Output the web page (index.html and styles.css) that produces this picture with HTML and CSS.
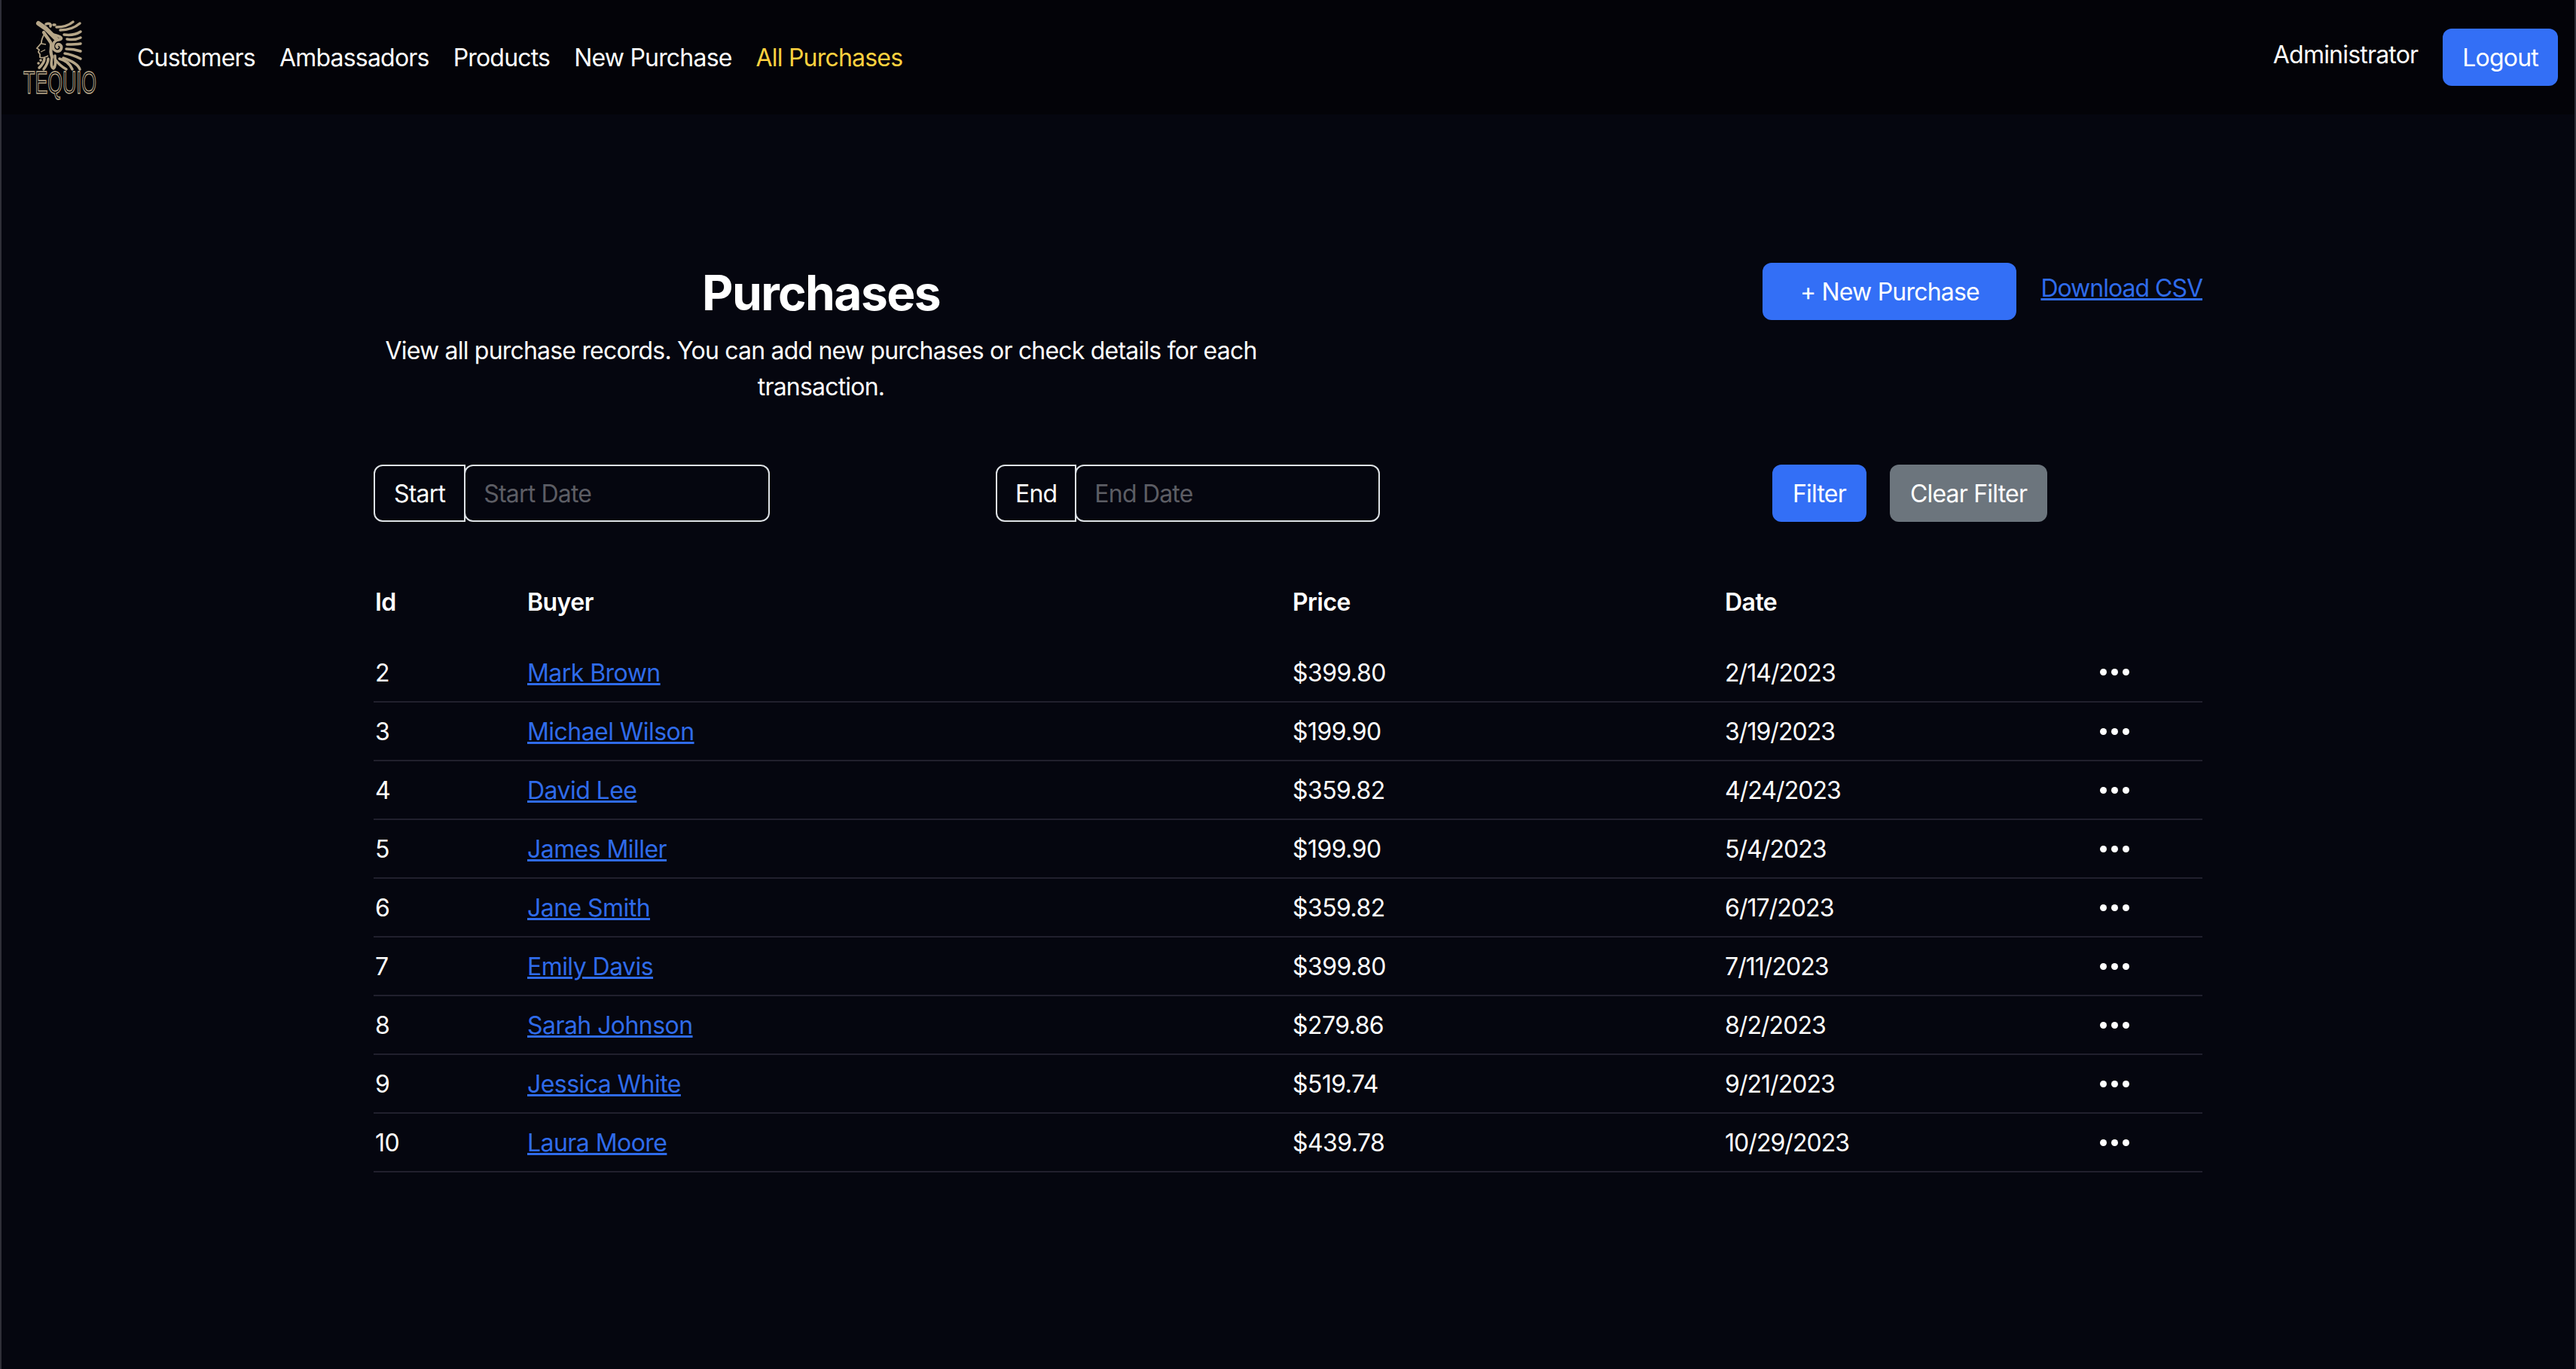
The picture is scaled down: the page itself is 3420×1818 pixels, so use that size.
FILE: index.html
```html
<!DOCTYPE html>
<html lang="en">
<head>
<meta charset="utf-8">
<title>Purchases</title>
<link rel="stylesheet" href="styles.css">
</head>
<body>
<nav class="navbar">
  <a class="brand" href="#">
    <svg class="logo" viewBox="0 0 97 97" width="97" height="97" fill="none" stroke="#b6a688">
      <g stroke-width="3.5" stroke-linecap="round" stroke-linejoin="round">
        <path d="M44 8C52 8 60 6 66 1" />
        <path d="M49 12C58 12 68 9 75 3" />
        <path d="M54 18C62 19 70 18 76 14" />
        <path d="M58 24C64 25 70 25 76 22" />
        <path d="M58 31C64 31 70 31 76 30" />
        <path d="M57 37C64 37 70 38 76 40" />
        <path d="M55 43C63 44 70 47 76 50" />
        <path d="M53 49C62 52 72 56 75 64" />
        <path d="M48 50C56 52 62 57 65 64" />
        <path d="M43 52C46 56 50 60 57 64" />
        <path d="M38 46C38 52 35 60 40 63C44 60 42 52 42 46" />
        <path d="M33 50C33 56 30 60 27 64" />
        <path d="M28 50C28 54 25 58 21 62" />
        <path d="M20 56h.1M23 52h.1" />
        <path d="M20 3L30 10L44 24" stroke-width="6" />
        <path d="M30 4C34 2 37 4 36 7M40 5h2" />
        <path d="M40 18C50 20 54 24 46 25C38 27 37 38 44 40C50 41 53 34 48 31C45 30 43 33 45 35" stroke-width="3.8" />
        <path d="M27 15L36 28C39 32 35 38 37 44L38 48" stroke-width="4.2" />
      </g>
      <path d="M29 16C26 20 24 26 24 29L18 36L21 38L20 41L22 44L22 48C25 50 29 48 33 46" stroke-width="1.8" />
      <path d="M24 30L30 31M23 41L29 38" stroke-width="1.3" />
      <text class="logo-word" x="0" y="96" textLength="97" lengthAdjust="spacingAndGlyphs">TEQUIO</text>
    </svg>
  </a>
  <ul class="nav-links">
    <li><a href="#">Customers</a></li>
    <li><a href="#">Ambassadors</a></li>
    <li><a href="#">Products</a></li>
    <li><a href="#">New Purchase</a></li>
    <li><a class="active" href="#">All Purchases</a></li>
  </ul>
  <div class="nav-user">
    <span class="user-name">Administrator</span>
    <button class="btn btn-primary btn-logout">Logout</button>
  </div>
</nav>

<main class="content">
  <header class="page-head">
    <div class="intro">
      <h1>Purchases</h1>
      <p>View all purchase records. You can add new purchases or check details for each transaction.</p>
    </div>
    <div class="head-actions">
      <button class="btn btn-primary btn-new">+ New Purchase</button>
      <a class="link csv-link" href="#">Download CSV</a>
    </div>
  </header>

  <form class="filters">
    <div class="input-group group-start">
      <span class="input-label">Start</span>
      <input class="input" type="text" placeholder="Start Date">
    </div>
    <div class="input-group group-end">
      <span class="input-label">End</span>
      <input class="input" type="text" placeholder="End Date">
    </div>
    <div class="filter-actions">
      <button type="button" class="btn btn-primary">Filter</button>
      <button type="button" class="btn btn-secondary">Clear Filter</button>
    </div>
  </form>

  <table class="table">
    <colgroup>
      <col class="c-id"><col class="c-buyer"><col class="c-price"><col class="c-date"><col class="c-more">
    </colgroup>
    <thead>
      <tr><th>Id</th><th>Buyer</th><th>Price</th><th>Date</th><th></th></tr>
    </thead>
    <tbody>
      <tr><td>2</td><td><a class="link" href="#">Mark Brown</a></td><td>$399.80</td><td class="date">2/14/2023</td><td><span class="dots"><i></i><i></i><i></i></span></td></tr>
      <tr><td>3</td><td><a class="link" href="#">Michael Wilson</a></td><td>$199.90</td><td class="date">3/19/2023</td><td><span class="dots"><i></i><i></i><i></i></span></td></tr>
      <tr><td>4</td><td><a class="link" href="#">David Lee</a></td><td>$359.82</td><td class="date">4/24/2023</td><td><span class="dots"><i></i><i></i><i></i></span></td></tr>
      <tr><td>5</td><td><a class="link" href="#">James Miller</a></td><td>$199.90</td><td class="date">5/4/2023</td><td><span class="dots"><i></i><i></i><i></i></span></td></tr>
      <tr><td>6</td><td><a class="link" href="#">Jane Smith</a></td><td>$359.82</td><td class="date">6/17/2023</td><td><span class="dots"><i></i><i></i><i></i></span></td></tr>
      <tr><td>7</td><td><a class="link" href="#">Emily Davis</a></td><td>$399.80</td><td class="date">7/11/2023</td><td><span class="dots"><i></i><i></i><i></i></span></td></tr>
      <tr><td>8</td><td><a class="link" href="#">Sarah Johnson</a></td><td>$279.86</td><td class="date">8/2/2023</td><td><span class="dots"><i></i><i></i><i></i></span></td></tr>
      <tr><td>9</td><td><a class="link" href="#">Jessica White</a></td><td>$519.74</td><td class="date">9/21/2023</td><td><span class="dots"><i></i><i></i><i></i></span></td></tr>
      <tr><td>10</td><td><a class="link" href="#">Laura Moore</a></td><td>$439.78</td><td class="date">10/29/2023</td><td><span class="dots"><i></i><i></i><i></i></span></td></tr>
    </tbody>
  </table>
</main>
</body>
</html>
```

FILE: styles.css
```css
* { box-sizing: border-box; }

html, body { height: 100%; }

body {
  margin: 0;
  background: #05060f;
  color: #fff;
  font-family: "Inter", "Liberation Sans", sans-serif;
  font-size: 32px;
  line-height: 48px;
  letter-spacing: -0.8px;
  border-left: 2px solid #2f2f38;
  border-right: 2px solid #2f2f38;
}

a { text-decoration: none; color: inherit; }

.navbar {
  display: flex;
  align-items: center;
  height: 152px;
  background: #030308;
  padding: 0 22px 0 29px;
}

.brand { display: flex; margin-right: 54px; }
.logo { display: block; overflow: visible; }
.logo-word {
  font-family: "Liberation Sans", sans-serif;
  font-size: 43px;
  letter-spacing: 0;
  fill: none;
  stroke: #b6a688;
  stroke-width: 1.5;
}

.nav-links {
  display: flex;
  gap: 32px;
  list-style: none;
  margin: 0;
  padding: 2px 0 0;
}
.nav-links .active { color: #ffd23f; }

.nav-user {
  display: flex;
  align-items: center;
  gap: 33px;
  margin-left: auto;
}
.user-name { position: relative; top: -3px; }

.btn {
  height: 76px;
  padding: 2px 27px 0;
  border: 0;
  border-radius: 12px;
  color: #fff;
  font: inherit;
  letter-spacing: inherit;
}
.btn-primary { background: #336ff6; }
.btn-secondary { background: #6c757d; }
.btn-new { width: 337px; }
.btn-logout { padding: 2px 26px 0; }

.link { color: #2f6bea; text-decoration: underline; }
.csv-link { margin-top: 10px; letter-spacing: -1px; }

.content {
  width: 2428px;
  margin: 0 auto;
  padding-top: 198px;
}

.page-head {
  display: flex;
  justify-content: space-between;
  align-items: flex-start;
  margin-top: -1px;
}
.intro { width: 1188px; text-align: center; }
.intro h1 {
  margin: 0 0 16px;
  font-size: 64px;
  font-weight: 700;
  letter-spacing: -1.6px;
  line-height: 77px;
  position: relative;
  top: 1px;
}
.intro p { margin: 0; }

.head-actions {
  display: flex;
  align-items: flex-start;
  gap: 32px;
}

.filters {
  display: grid;
  grid-template-columns: 826px 1031px auto;
  margin-top: 79px;
}
.input-group { display: flex; height: 76px; }
.group-start { width: 526px; }
.group-end { width: 510px; }
.input-label {
  padding: 13px 25px 0;
  border: 2px solid #dee2e6;
  border-radius: 12px 0 0 12px;
}
.group-end .input-label { padding: 13px 24px 0; }
.input {
  flex: 1;
  min-width: 0;
  margin-left: -2px;
  padding: 2px 24px 0;
  background: transparent;
  border: 2px solid #dee2e6;
  border-radius: 12px;
  color: #fff;
  font: inherit;
  letter-spacing: inherit;
  outline: 0;
}
.input::placeholder { color: #5c5d64; opacity: 1; }

.filter-actions { display: flex; gap: 31px; }

.table {
  width: 2428px;
  margin-top: 67px;
  border-collapse: collapse;
  table-layout: fixed;
  letter-spacing: -0.55px;
}
.c-id { width: 204px; }
.c-buyer { width: 1016px; }
.c-price { width: 574px; }
.c-date { width: 490px; }

.table th {
  height: 94px;
  padding: 16px 0 0;
  font-weight: 600;
  text-align: left;
  vertical-align: top;
}
.table td {
  height: 78px;
  padding: 2px 0 0;
  border-bottom: 2px solid #21202d;
  vertical-align: middle;
}
.table th:first-child,
.table td:first-child { padding-left: 2px; }
.table .date { letter-spacing: -0.95px; }
.dots {
  display: inline-flex;
  gap: 6px;
  margin-left: 8px;
  vertical-align: middle;
  position: relative;
  top: -3px;
}
.dots i {
  width: 9px;
  height: 9px;
  border-radius: 50%;
  background: #fff;
}
```
